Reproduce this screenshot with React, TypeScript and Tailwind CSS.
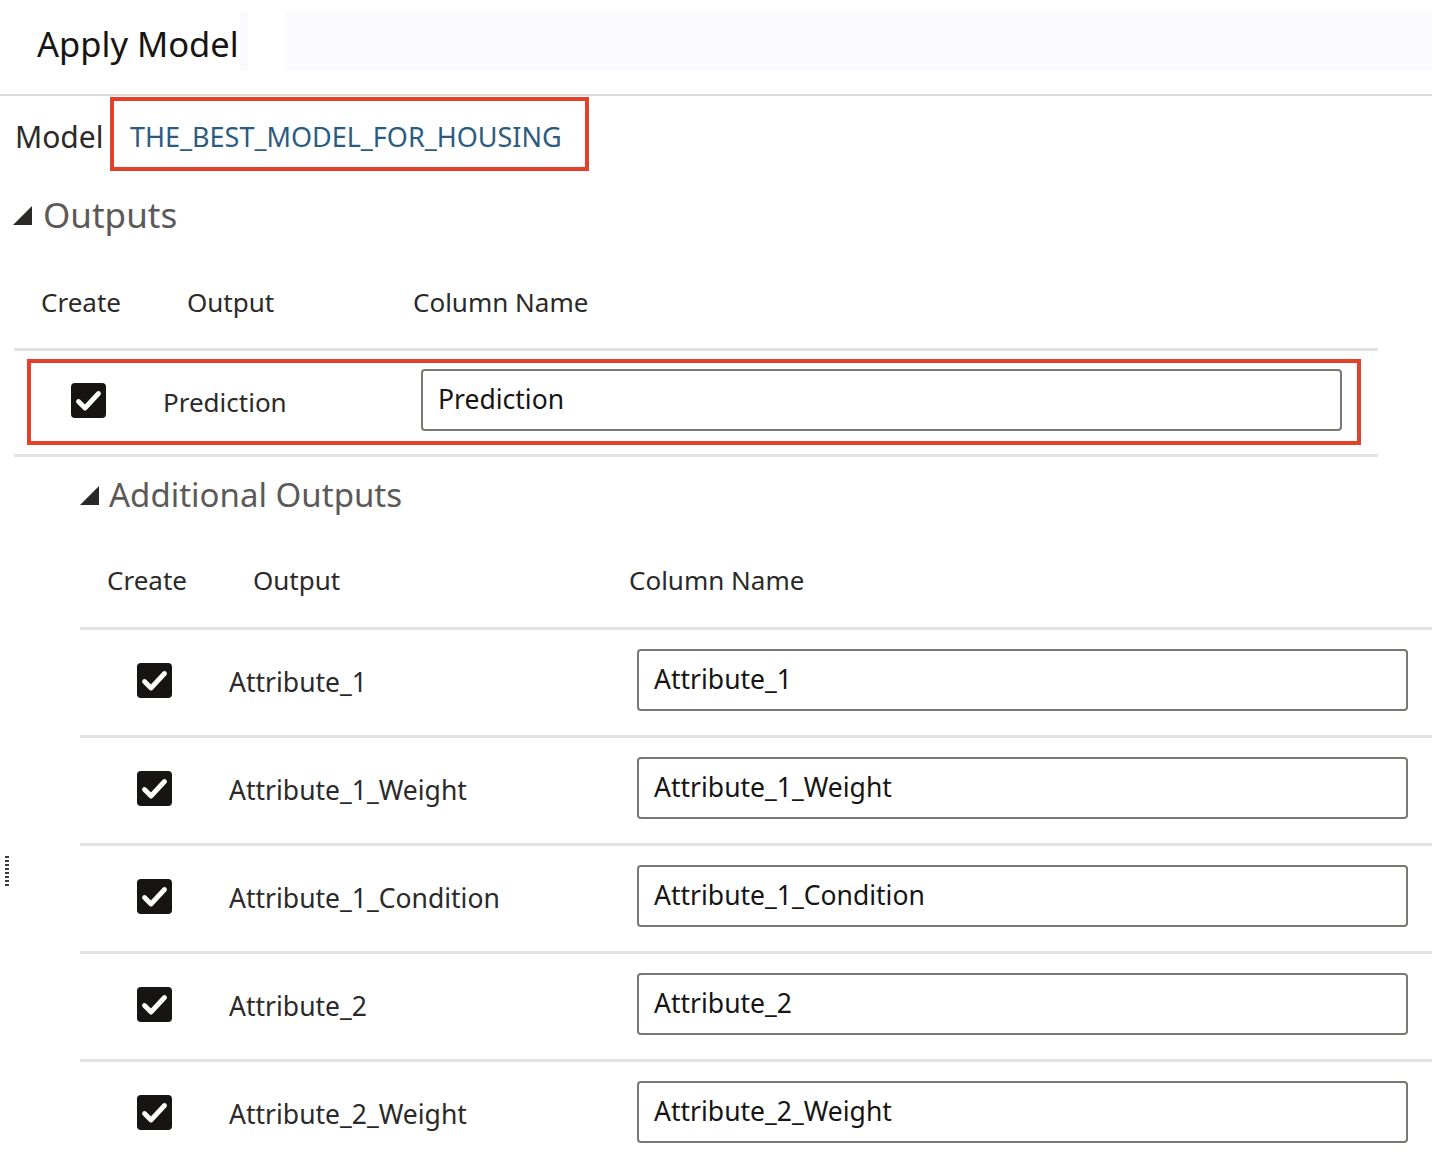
import React from "react";

const font = { fontFamily: '"Noto Sans", "Open Sans", sans-serif' };

const additional = [
  "Attribute_1",
  "Attribute_1_Weight",
  "Attribute_1_Condition",
  "Attribute_2",
  "Attribute_2_Weight",
];

function Check() {
  return (
    <div className="w-[35px] h-[35px] rounded-[4px] bg-[#161513] flex items-center justify-center shrink-0">
      <svg width="35" height="35" viewBox="0 0 35 35" fill="none">
        <path
          d="M7.5 18.5l6.5 6.5L27.5 10.5"
          stroke="#fff"
          strokeWidth="4.8"
          strokeLinecap="round"
          strokeLinejoin="round"
        />
      </svg>
    </div>
  );
}

function Triangle() {
  return (
    <svg width="19" height="19" viewBox="0 0 19 19" className="shrink-0">
      <polygon points="19,0 19,19 0,19" fill="#2b2a28" />
    </svg>
  );
}

function TextBox({ value, className }: { value: string; className: string }) {
  return (
    <div
      className={`h-[62px] border-2 border-[#7b7772] rounded-[4px] flex items-center pl-[15px] text-[26.5px] text-[#161513] ${className}`}
    >
      {value}
    </div>
  );
}

export default function App() {
  return (
    <div className="relative w-[1432px] h-[1152px] bg-white overflow-hidden" style={font}>
      {/* title bar */}
      <div className="h-[96px] flex border-b-2 border-[#dcdcd6]">
        <div className="w-[240px] shrink-0 pl-[37px] pt-[19px] text-[34.5px] text-[#161513] leading-[50px] whitespace-nowrap">
          Apply Model
        </div>
        <div className="mt-[11px] h-[60px] w-[8px] bg-[#fafafc] rounded" />
        <div className="mt-[11px] h-[60px] flex-1 ml-[37px] bg-[#fbfbfd] rounded-l" />
      </div>

      {/* model */}
      <div className="h-[78px] flex items-start pt-px">
        <div className="w-[110px] pl-[15px] h-[74px] pt-[5px] flex items-center text-[30px] text-[#2b2a28]">Model</div>
        <div className="w-[479px] h-[74px] border-4 border-[#e5402a] flex items-center pl-[16px] pt-[6px] text-[27px] text-[#2b5c80] whitespace-nowrap">
          THE_BEST_MODEL_FOR_HOUSING
        </div>
      </div>

      {/* outputs */}
      <div className="h-[82px] flex items-center pl-[13px] gap-[11px]">
        <Triangle />
        <span className="text-[35px] text-[#5b5a58]">Outputs</span>
      </div>

      <div className="ml-[14px] w-[1364px]">
        <div className="h-[95px] flex items-center text-[26px] text-[#2b2a28] border-b-[3px] border-[#e2e2e2]">
          <span className="ml-[27px] w-[146px]">Create</span>
          <span className="w-[226px]">Output</span>
          <span>Column Name</span>
        </div>
        <div className="pt-[8px] pb-[9px] pl-[13px] border-b-[3px] border-[#e2e2e2]">
          <div className="w-[1334px] h-[86px] border-4 border-[#e5402a] flex items-center">
            <div className="ml-[40px] -mt-[4px]">
              <Check />
            </div>
            <span className="ml-[57px] w-[258px] text-[26px] text-[#2b2a28]">Prediction</span>
            <TextBox value="Prediction" className="w-[921px] -mt-[4px]" />
          </div>
        </div>
      </div>

      {/* additional outputs */}
      <div className="h-[76px] flex items-center pl-[80px] gap-[10px]">
        <Triangle />
        <span className="text-[33px] text-[#5b5a58]">Additional Outputs</span>
      </div>

      <div className="ml-[80px]">
        <div className="h-[97px] flex items-center text-[26px] text-[#2b2a28] border-b-[3px] border-[#e2e2e2]">
          <span className="ml-[27px] w-[146px]">Create</span>
          <span className="w-[376px]">Output</span>
          <span>Column Name</span>
        </div>
        {additional.map((name) => (
          <div key={name} className="h-[108px] flex items-center border-b-[3px] border-[#e2e2e2]">
            <div className="ml-[57px] -mt-[4px]">
              <Check />
            </div>
            <span className="ml-[57px] w-[408px] text-[26.5px] text-[#2b2a28]">{name}</span>
            <TextBox value={name} className="w-[771px] -mt-[6px]" />
          </div>
        ))}
      </div>

      {/* splitter handle */}
      <div className="absolute left-[5px] top-[856px] w-[4px] h-[32px] bg-[repeating-linear-gradient(to_bottom,#3a3a3a_0px,#3a3a3a_2px,transparent_2px,transparent_4px)]" />
    </div>
  );
}
